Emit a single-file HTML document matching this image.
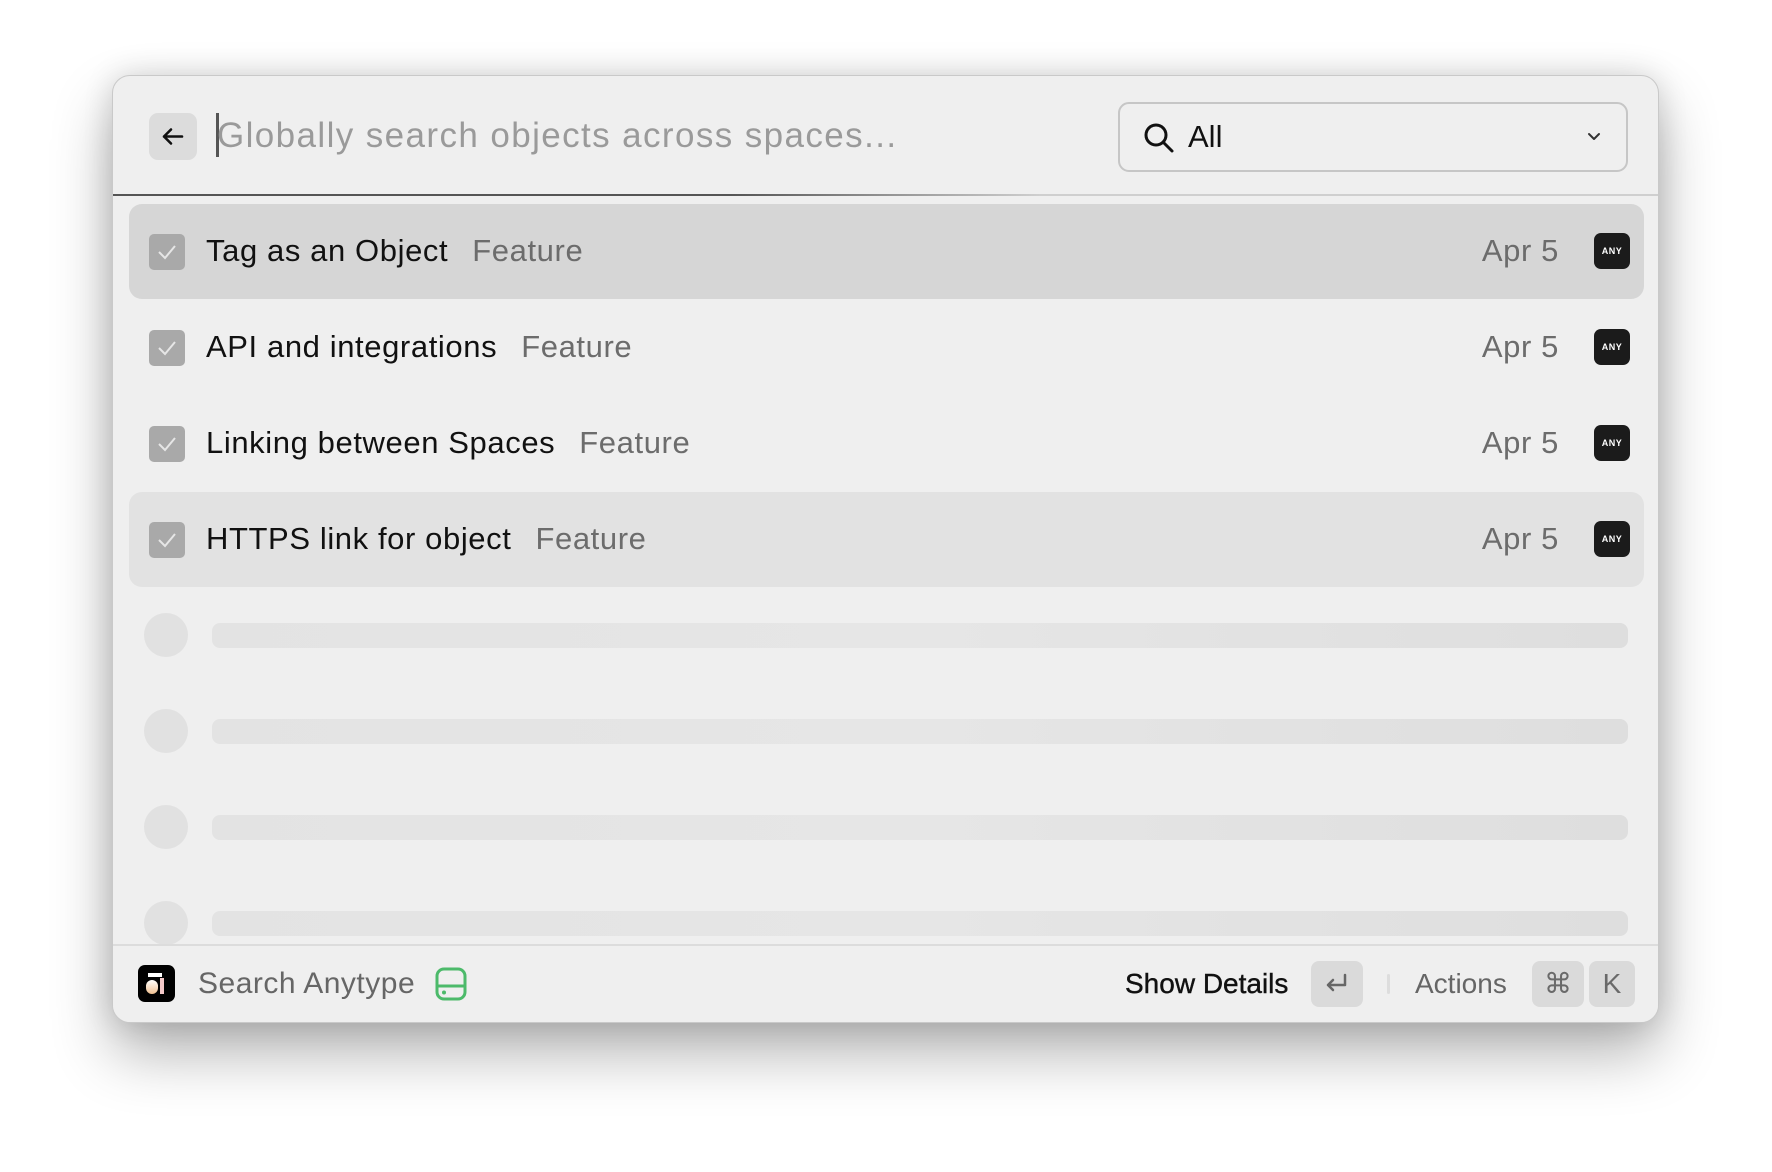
<!DOCTYPE html>
<html><head><meta charset="utf-8"><style>
*{margin:0;padding:0;box-sizing:border-box}
body{width:1772px;height:1172px;background:#fff;font-family:"Liberation Sans",sans-serif;position:relative;overflow:hidden}
.win{position:absolute;left:112px;top:75px;width:1547px;height:948px;background:#efefef;border-radius:18px;border:1px solid #c9c9c9;box-shadow:0 30px 60px rgba(0,0,0,.3),0 0 30px rgba(0,0,0,.14);overflow:hidden}
.abs{position:absolute}
.back{left:36px;top:37px;width:48px;height:47px;background:#dcdcdc;border-radius:9px}
.ph{left:104px;top:40px;font-size:35px;color:#9a9a9a;line-height:40px;white-space:nowrap;letter-spacing:1.4px}
.caret{left:103px;top:37px;width:3px;height:44px;background:#555}
.dd{left:1005px;top:26px;width:510px;height:70px;border:2px solid #c6c6c6;border-radius:11px}
.div1{left:0;top:118px;width:100%;height:2px;background:linear-gradient(90deg,#555 0,#555 40%,#cfcfcf 60%,#cfcfcf 100%)}
.row{position:absolute;left:16px;width:1515px;height:95px;border-radius:13px}
.cb{position:absolute;left:20px;top:30px;width:36px;height:36px;border-radius:5px;background:#a9a9a9}
.t{position:absolute;left:77px;top:28px;font-size:31px;color:#111;white-space:nowrap;line-height:38px;letter-spacing:.6px}
.t span{color:#6c6c6c;margin-left:24px}
.d{position:absolute;right:85px;top:28px;font-size:31px;color:#6c6c6c;line-height:38px;letter-spacing:.6px}
.ic{position:absolute;right:14px;top:29px;width:36px;height:36px;background:#1b1b1b;border-radius:7px;color:#fff;font-size:9px;font-weight:bold;text-align:center;line-height:36px;letter-spacing:.5px}
.sk{position:absolute;left:31px;width:44px;height:44px;border-radius:50%;background:#e1e1e1}
.bar{position:absolute;left:99px;width:1416px;height:25px;border-radius:8px;background:linear-gradient(90deg,#e3e3e3,#e6e6e6 50%,#dedede)}
.div2{left:0;top:868px;width:100%;height:2px;background:#dcdcdc}
.key{position:absolute;top:885px;height:46px;background:#dadada;border-radius:8px;color:#6a6a6a;font-size:28px;text-align:center;line-height:46px}
</style></head><body>
<div class="win">
<div class="abs back"><svg width="48" height="47" viewBox="0 0 48 47"><path d="M33 23.5H15M22 16.5l-7 7 7 7" fill="none" stroke="#111" stroke-width="2.6" stroke-linecap="round" stroke-linejoin="round"/></svg></div>
<div class="abs caret"></div>
<div class="abs ph">Globally search objects across spaces...</div>
<div class="abs dd">
<svg class="abs" style="left:22px;top:17px" width="34" height="34" viewBox="0 0 34 34"><circle cx="14" cy="14" r="10" fill="none" stroke="#111" stroke-width="3"/><path d="M21.5 21.5L30 30" stroke="#111" stroke-width="3" stroke-linecap="round"/></svg>
<div class="abs" style="left:68px;top:14px;font-size:31px;color:#111;line-height:38px">All</div>
<svg class="abs" style="left:466px;top:27px" width="16" height="12" viewBox="0 0 16 12"><path d="M3 3l5 5 5-5" fill="none" stroke="#333" stroke-width="2" stroke-linecap="round" stroke-linejoin="round"/></svg>
</div>
<div class="abs div1"></div>

<div class="row" style="top:128px;background:#d6d6d6"><div class="cb"><svg width="36" height="36"><path d="M10 18l6 6 10-12" fill="none" stroke="#e6e6e6" stroke-width="2"/></svg></div><div class="t">Tag as an Object<span>Feature</span></div><div class="d">Apr 5</div><div class="ic">ANY</div></div>
<div class="row" style="top:224px"><div class="cb"><svg width="36" height="36"><path d="M10 18l6 6 10-12" fill="none" stroke="#e6e6e6" stroke-width="2"/></svg></div><div class="t">API and integrations<span>Feature</span></div><div class="d">Apr 5</div><div class="ic">ANY</div></div>
<div class="row" style="top:320px"><div class="cb"><svg width="36" height="36"><path d="M10 18l6 6 10-12" fill="none" stroke="#e6e6e6" stroke-width="2"/></svg></div><div class="t">Linking between Spaces<span>Feature</span></div><div class="d">Apr 5</div><div class="ic">ANY</div></div>
<div class="row" style="top:416px;background:#e2e2e2"><div class="cb"><svg width="36" height="36"><path d="M10 18l6 6 10-12" fill="none" stroke="#e6e6e6" stroke-width="2"/></svg></div><div class="t">HTTPS link for object<span>Feature</span></div><div class="d">Apr 5</div><div class="ic">ANY</div></div>

<div class="sk" style="top:537px"></div><div class="bar" style="top:547px"></div>
<div class="sk" style="top:633px"></div><div class="bar" style="top:643px"></div>
<div class="sk" style="top:729px"></div><div class="bar" style="top:739px"></div>
<div class="sk" style="top:825px"></div><div class="bar" style="top:835px"></div>
<div class="abs div2" style="background:#efefef;top:870px;height:78px"></div>
<div class="abs div2"></div>

<div class="abs" style="left:25px;top:889px;width:37px;height:37px;background:#000;border-radius:7px">
<div class="abs" style="left:10px;top:8px;width:14px;height:4px;background:#fff"></div>
<div class="abs" style="left:8px;top:15px;width:12px;height:14px;border-radius:6px;background:linear-gradient(#fff,#f0c090)"></div>
<div class="abs" style="left:22px;top:13px;width:4px;height:16px;background:#f3c8c8"></div>
</div>
<div class="abs" style="left:85px;top:890px;font-size:30px;color:#666;line-height:36px;letter-spacing:.5px">Search Anytype</div>
<svg class="abs" style="left:320px;top:890px" width="36" height="36" viewBox="0 0 36 36"><rect x="4" y="3" width="28" height="30" rx="7" fill="none" stroke="#4cba6a" stroke-width="3"/><path d="M4 20h28" stroke="#4cba6a" stroke-width="3"/><circle cx="11" cy="26.5" r="2" fill="#4cba6a"/></svg>

<div class="abs" style="left:1012px;top:890px;font-size:28px;color:#111;line-height:36px;-webkit-text-stroke:.4px #111">Show Details</div>
<div class="key" style="left:1198px;width:52px"><svg width="52" height="46" viewBox="0 0 52 46"><path d="M34 14v10H17M22 19l-5 5 5 5" fill="none" stroke="#666" stroke-width="2.5" stroke-linecap="round" stroke-linejoin="round"/></svg></div>
<div class="abs" style="left:1274px;top:898px;width:3px;height:20px;background:#ddd;border-radius:2px"></div>
<div class="abs" style="left:1302px;top:890px;font-size:28px;color:#666;line-height:36px">Actions</div>
<div class="key" style="left:1419px;width:52px">⌘</div>
<div class="key" style="left:1476px;width:46px">K</div>
</div>
</body></html>
